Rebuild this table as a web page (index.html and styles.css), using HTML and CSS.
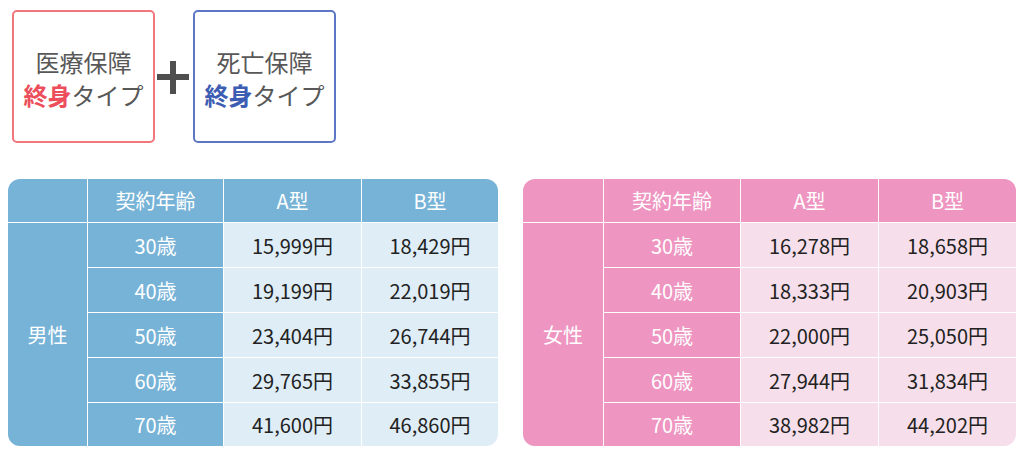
FILE: index.html
```html
<!DOCTYPE html>
<html lang="ja">
<head>
<meta charset="utf-8">
<link rel="stylesheet" href="styles.css">
</head>
<body>
<div class="top">
  <div class="box box-red">
    <div class="line">医療保障</div>
    <div class="line"><span class="em red">終身</span>タイプ</div>
  </div>
  <div class="plus"><span class="ph"></span><span class="pv"></span></div>
  <div class="box box-blue">
    <div class="line">死亡保障</div>
    <div class="line"><span class="em blue">終身</span>タイプ</div>
  </div>
</div>
<div class="tables">
  <div class="tbl tbl-m">
    <div class="c h"></div>
    <div class="c h">契約年齢</div>
    <div class="c h">A型</div>
    <div class="c h">B型</div>
    <div class="c h sex">男性</div>
    <div class="c h">30歳</div><div class="c d">15,999円</div><div class="c d">18,429円</div>
    <div class="c h">40歳</div><div class="c d">19,199円</div><div class="c d">22,019円</div>
    <div class="c h">50歳</div><div class="c d">23,404円</div><div class="c d">26,744円</div>
    <div class="c h">60歳</div><div class="c d">29,765円</div><div class="c d">33,855円</div>
    <div class="c h">70歳</div><div class="c d">41,600円</div><div class="c d">46,860円</div>
  </div>
  <div class="tbl tbl-f">
    <div class="c h"></div>
    <div class="c h">契約年齢</div>
    <div class="c h">A型</div>
    <div class="c h">B型</div>
    <div class="c h sex">女性</div>
    <div class="c h">30歳</div><div class="c d">16,278円</div><div class="c d">18,658円</div>
    <div class="c h">40歳</div><div class="c d">18,333円</div><div class="c d">20,903円</div>
    <div class="c h">50歳</div><div class="c d">22,000円</div><div class="c d">25,050円</div>
    <div class="c h">60歳</div><div class="c d">27,944円</div><div class="c d">31,834円</div>
    <div class="c h">70歳</div><div class="c d">38,982円</div><div class="c d">44,202円</div>
  </div>
</div>
</body>
</html>
```
FILE: styles.css
```css
html, body {
  margin: 0;
  padding: 0;
  background: #ffffff;
  font-family: "Noto Sans CJK JP", "Noto Sans", sans-serif;
}
.top {
  display: flex;
  align-items: center;
  padding: 10px 0 0 12px;
  height: 133px;
}
.box {
  box-sizing: border-box;
  width: 143px;
  height: 133px;
  border: 2px solid;
  border-radius: 5px;
  display: flex;
  flex-direction: column;
  justify-content: center;
  align-items: center;
  padding-top: 3px;
  color: #585858;
  font-size: 24px;
  line-height: 33px;
}
.box-red { border-color: #f2767d; }
.box-blue { border-color: #5d77c6; }
.em { font-weight: 700; }
.red { color: #ec4f5b; }
.blue { color: #3d5db3; }
.plus {
  width: 38px;
  height: 133px;
  position: relative;
}
.ph, .pv {
  position: absolute;
  background: #4f4f4f;
}
.ph { left: 2px; top: 64px; width: 32px; height: 6px; }
.pv { left: 15px; top: 51px; width: 6px; height: 33px; }
.tables {
  display: flex;
  gap: 25px;
  padding: 36px 0 0 8px;
}
.tbl {
  display: grid;
  grid-template-rows: 43px 44px 44px 44px 44px 43px;
  gap: 1px;
  background: #ffffff;
  border-radius: 12px;
  overflow: hidden;
  font-size: 20px;
}
.tbl-m { grid-template-columns: 79px 135px 137px 136px; }
.tbl-f { grid-template-columns: 80px 136px 137px 137px; }
.c {
  display: flex;
  align-items: center;
  justify-content: center;
}
.h { color: #ffffff; }
.d { color: #222222; }
.sex { grid-row: 2 / 7; grid-column: 1; }
.tbl-m .h { background: #77b3d7; }
.tbl-m .d { background: #dfedf6; }
.tbl-f .h { background: #ee95c1; }
.tbl-f .d { background: #f6dfea; }
```
